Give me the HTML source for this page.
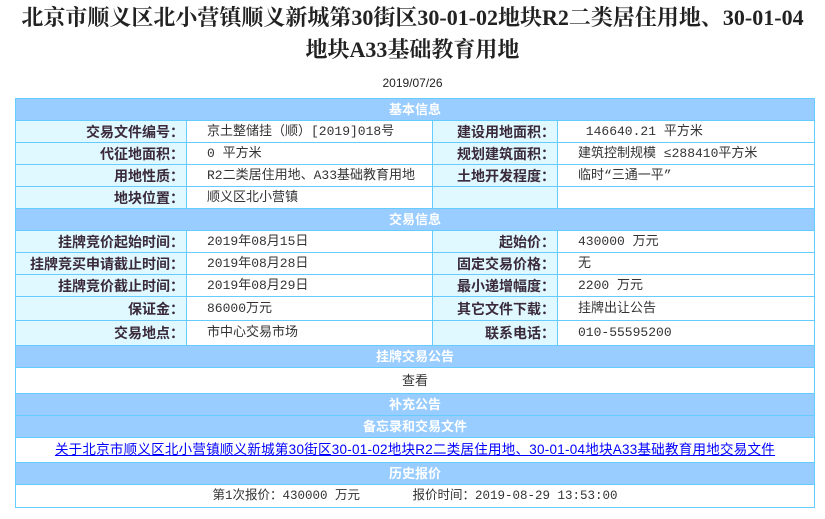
<!DOCTYPE html>
<html><head><meta charset="utf-8"><style>
body{margin:0;background:#fff;font-family:"Liberation Sans","Noto Sans CJK SC",sans-serif;}
h1{margin:0;padding-top:2px;font-family:"Liberation Serif","Noto Serif CJK SC",serif;font-size:22px;font-weight:bold;color:#222;text-align:center;line-height:32px;}
.date{text-align:center;font-size:12px;color:#222;margin-top:10px;line-height:14px;}
table{position:absolute;left:15px;top:98px;width:800px;border-collapse:collapse;font-size:13px;color:#333;}
td{border:1px solid #66ccff;height:21px;padding:0;line-height:20px;}
td.h{background:#99ccff;color:#fff;font-weight:bold;text-align:center;}
td.l{background:#e0f8ff;text-align:right;font-weight:bold;color:#3a2a3a;padding-right:2px;font-size:14px;}
td.v{padding-left:20px;font-family:"Liberation Mono","Noto Sans CJK SC",monospace;font-size:13px;}
td.c{text-align:center;}
a{color:#00f;letter-spacing:0.25px;font-size:13.5px;}
.m{font-family:"Liberation Mono","Noto Sans CJK SC",monospace;}
</style></head><body>
<h1>北京市顺义区北小营镇顺义新城第30街区30-01-02地块R2二类居住用地、30-01-04<br>地块A33基础教育用地</h1>
<div class="date">2019/07/26</div>
<table>
<colgroup><col style="width:171px"><col style="width:246px"><col style="width:125px"><col></colgroup>
<tr><td colspan="4" class="h">基本信息</td></tr>
<tr><td class="l">交易文件编号：</td><td class="v">京土整储挂（顺）[2019]018号</td><td class="l">建设用地面积：</td><td class="v">&nbsp;146640.21 平方米</td></tr>
<tr><td class="l">代征地面积：</td><td class="v">0 平方米</td><td class="l">规划建筑面积：</td><td class="v">建筑控制规模 ≤288410平方米</td></tr>
<tr><td class="l">用地性质：</td><td class="v">R2二类居住用地、A33基础教育用地</td><td class="l">土地开发程度：</td><td class="v">临时“三通一平”</td></tr>
<tr><td class="l">地块位置：</td><td class="v">顺义区北小营镇</td><td class="l"></td><td class="v"></td></tr>
<tr><td colspan="4" class="h">交易信息</td></tr>
<tr><td class="l">挂牌竞价起始时间：</td><td class="v">2019年08月15日</td><td class="l">起始价：</td><td class="v">430000 万元</td></tr>
<tr><td class="l">挂牌竞买申请截止时间：</td><td class="v">2019年08月28日</td><td class="l">固定交易价格：</td><td class="v">无</td></tr>
<tr><td class="l">挂牌竞价截止时间：</td><td class="v">2019年08月29日</td><td class="l">最小递增幅度：</td><td class="v">2200 万元</td></tr>
<tr><td class="l" style="height:23px">保证金：</td><td class="v">86000万元</td><td class="l">其它文件下载：</td><td class="v">挂牌出让公告</td></tr>
<tr><td class="l" style="height:24px">交易地点：</td><td class="v">市中心交易市场</td><td class="l">联系电话：</td><td class="v">010-55595200</td></tr>
<tr><td colspan="4" class="h">挂牌交易公告</td></tr>
<tr><td colspan="4" class="c" style="height:25px">查看</td></tr>
<tr><td colspan="4" class="h">补充公告</td></tr>
<tr><td colspan="4" class="h">备忘录和交易文件</td></tr>
<tr><td colspan="4" class="c" style="height:24px"><a href="#">关于北京市顺义区北小营镇顺义新城第30街区30-01-02地块R2二类居住用地、30-01-04地块A33基础教育用地交易文件</a></td></tr>
<tr><td colspan="4" class="h">历史报价</td></tr>
<tr><td colspan="4" class="c m" style="height:22px;font-size:12.5px">第1次报价：430000 万元 &nbsp; &nbsp; &nbsp; 报价时间：2019-08-29 13:53:00</td></tr>
</table>
</body></html>
